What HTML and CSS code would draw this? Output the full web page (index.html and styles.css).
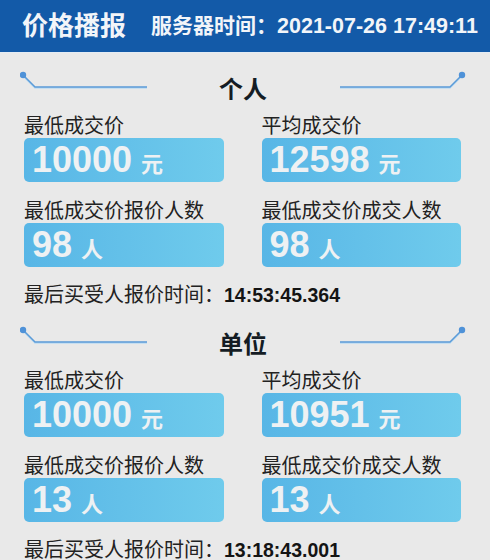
FILE: index.html
```html
<!DOCTYPE html>
<html lang="zh-CN">
<head>
<meta charset="utf-8">
<title>价格播报</title>
<link rel="stylesheet" href="styles.css">
</head>
<body>
<header class="topbar">
  <span class="brand">价格播报</span>
  <span class="server">服务器时间：<span class="clock">2021-07-26 17:49:11</span></span>
</header>

<section class="group">
  <div class="title-row">
    <svg class="deco" width="130" height="36" viewBox="0 0 130 36">
      <path d="M3 6 L15 18 L127 18" fill="none" stroke="#bcdcf2" stroke-width="1.5"/>
      <path d="M3 5 L15 17 L127 17" fill="none" stroke="#5b9bd8" stroke-width="1.5"/>
      <circle cx="3" cy="5" r="3.2" fill="#4f92d8"/>
    </svg>
    <h2 class="title">个人</h2>
    <svg class="deco" width="130" height="36" viewBox="0 0 130 36">
      <path d="M4 18 L114 18 L126 6" fill="none" stroke="#bcdcf2" stroke-width="1.5"/>
      <path d="M4 17 L114 17 L126 5" fill="none" stroke="#5b9bd8" stroke-width="1.5"/>
      <circle cx="126" cy="5" r="3.2" fill="#4f92d8"/>
    </svg>
  </div>
  <div class="grid">
    <div class="cell">
      <div class="label">最低成交价</div>
      <div class="box"><span class="num">10000</span><span class="unit">元</span></div>
    </div>
    <div class="cell">
      <div class="label">平均成交价</div>
      <div class="box"><span class="num">12598</span><span class="unit">元</span></div>
    </div>
    <div class="cell">
      <div class="label">最低成交价报价人数</div>
      <div class="box"><span class="num">98</span><span class="unit">人</span></div>
    </div>
    <div class="cell">
      <div class="label">最低成交价成交人数</div>
      <div class="box"><span class="num">98</span><span class="unit">人</span></div>
    </div>
  </div>
  <div class="last">最后买受人报价时间：<b class="time">14:53:45.364</b></div>
</section>

<section class="group">
  <div class="title-row">
    <svg class="deco" width="130" height="36" viewBox="0 0 130 36">
      <path d="M3 6 L15 18 L127 18" fill="none" stroke="#bcdcf2" stroke-width="1.5"/>
      <path d="M3 5 L15 17 L127 17" fill="none" stroke="#5b9bd8" stroke-width="1.5"/>
      <circle cx="3" cy="5" r="3.2" fill="#4f92d8"/>
    </svg>
    <h2 class="title">单位</h2>
    <svg class="deco" width="130" height="36" viewBox="0 0 130 36">
      <path d="M4 18 L114 18 L126 6" fill="none" stroke="#bcdcf2" stroke-width="1.5"/>
      <path d="M4 17 L114 17 L126 5" fill="none" stroke="#5b9bd8" stroke-width="1.5"/>
      <circle cx="126" cy="5" r="3.2" fill="#4f92d8"/>
    </svg>
  </div>
  <div class="grid">
    <div class="cell">
      <div class="label">最低成交价</div>
      <div class="box"><span class="num">10000</span><span class="unit">元</span></div>
    </div>
    <div class="cell">
      <div class="label">平均成交价</div>
      <div class="box"><span class="num">10951</span><span class="unit">元</span></div>
    </div>
    <div class="cell">
      <div class="label">最低成交价报价人数</div>
      <div class="box"><span class="num">13</span><span class="unit">人</span></div>
    </div>
    <div class="cell">
      <div class="label">最低成交价成交人数</div>
      <div class="box"><span class="num">13</span><span class="unit">人</span></div>
    </div>
  </div>
  <div class="last">最后买受人报价时间：<b class="time">13:18:43.001</b></div>
</section>
</body>
</html>
```

FILE: styles.css
```css
html, body {
  margin: 0;
  padding: 0;
}

body {
  background: #e9e9e9;
  font-family: "Liberation Sans", "Noto Sans CJK SC", sans-serif;
  color: #222;
  overflow: hidden;
}

.topbar {
  height: 52px;
  background: #135aa8;
  border-bottom: 1px solid #e4ecf4;
  display: flex;
  align-items: center;
  padding-left: 22px;
  color: #f2f5f9;
  font-weight: bold;
  white-space: nowrap;
}

.brand {
  font-size: 26px;
  line-height: 52px;
}

.server {
  font-size: 21px;
  line-height: 52px;
  margin-left: 25px;
}

.clock {
  font-size: 21.5px;
}

.group {
  padding: 17px 0 0 0;
}

.title-row {
  display: flex;
  justify-content: space-between;
  align-items: flex-start;
  height: 36px;
  padding: 0 24px 0 20px;
}

.deco {
  display: block;
}

.title {
  margin: 0;
  font-size: 24px;
  line-height: 36px;
  font-weight: bold;
  color: #141c24;
  font-family: "Noto Sans CJK SC", sans-serif;
}

.grid {
  display: grid;
  grid-template-columns: 1fr 1fr;
  column-gap: 38px;
  row-gap: 15px;
  padding: 0 29px 0 24px;
  margin-top: 6px;
}

.label {
  font-size: 20px;
  line-height: 26px;
  color: #222;
  white-space: nowrap;
  font-family: "Noto Sans CJK SC", sans-serif;
}

.box {
  height: 44px;
  line-height: 44px;
  border-radius: 5px;
  background: linear-gradient(90deg, #58b6e6 0%, #6fcbec 100%);
  padding-left: 8px;
  color: #eef1f3;
  font-weight: bold;
  white-space: nowrap;
  font-size: 36px;
}

.num {
  font-size: 36px;
}

.unit {
  font-size: 22px;
  line-height: 1;
  margin-left: 9px;
}

.last {
  margin-top: 15px;
  padding-left: 24px;
  font-size: 20px;
  line-height: 26px;
  color: #222;
  white-space: nowrap;
}

.time {
  font-weight: bold;
  color: #141414;
  font-size: 19.5px;
}
```
